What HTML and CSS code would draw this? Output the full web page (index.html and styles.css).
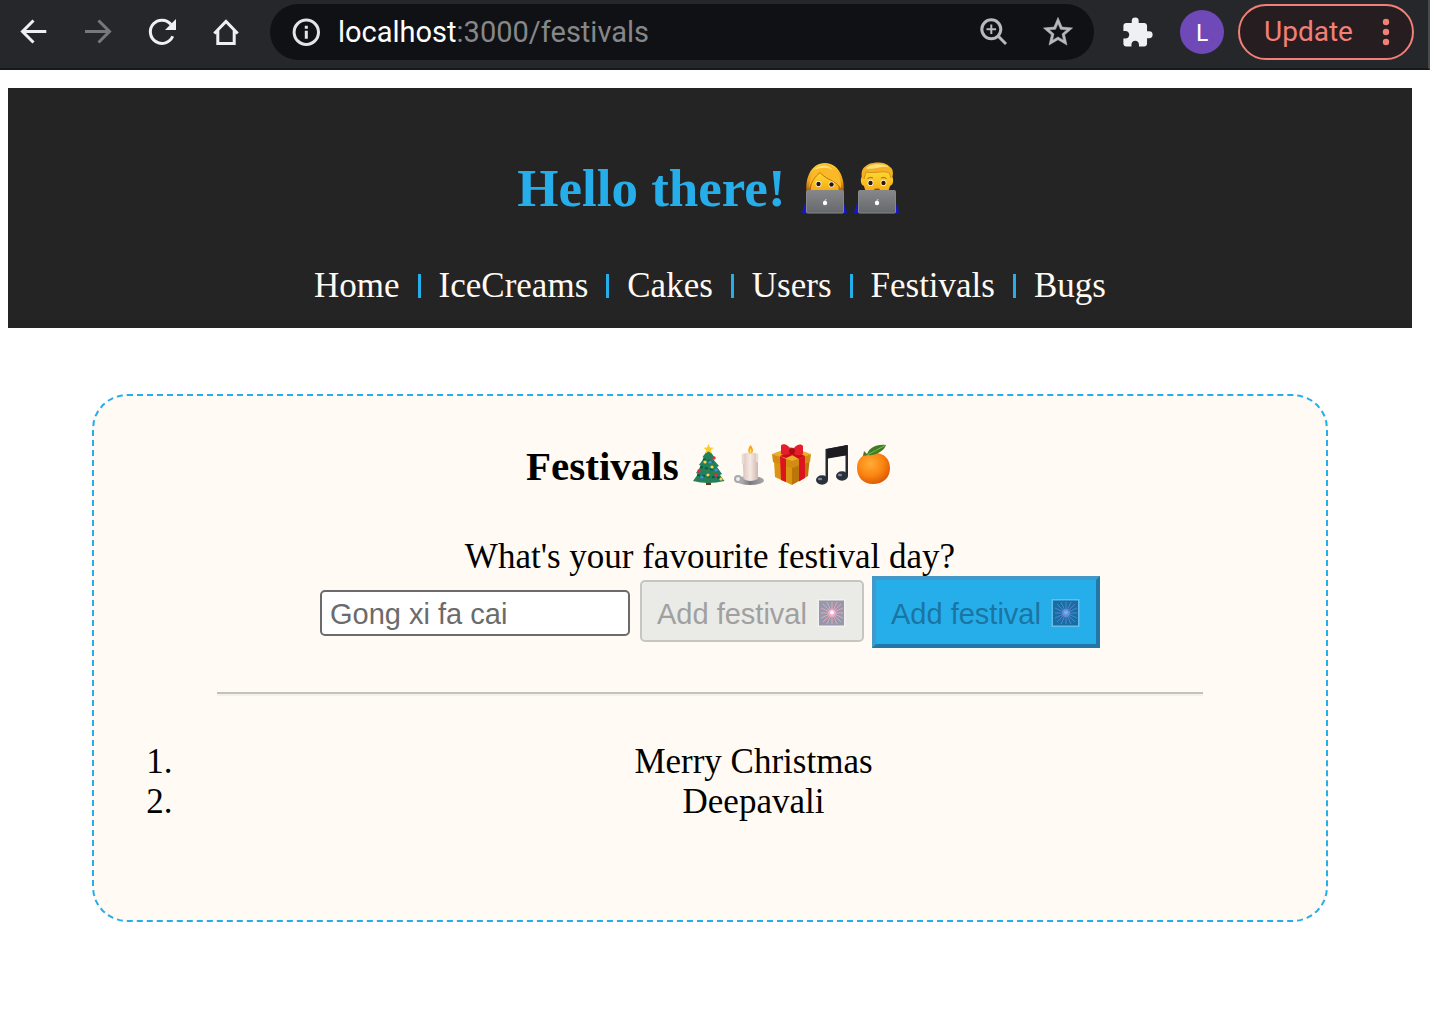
FILE: index.html
```html
<!DOCTYPE html>
<html lang="en">
<head>
<meta charset="utf-8">
<meta name="viewport" content="width=device-width, initial-scale=1">
<title>Festivals</title>
<link rel="stylesheet" href="styles.css">
</head>
<body>
<div class="toolbar">
  <button class="tool" type="button" aria-label="Back"><svg viewBox="0 0 32 32"><path d="M28.300 15.500H4.500M15.500 4.500L4.500 15.500L15.500 26.500"/></svg></button>
  <button class="tool tool-dim" type="button" aria-label="Forward"><svg viewBox="0 0 32 32"><path d="M3 15.500H27M16.500 4.500L27.500 15.500L16.500 26.500"/></svg></button>
  <button class="tool" type="button" aria-label="Reload"><svg viewBox="0 0 32 32"><path d="M26.700 20.200A11.600 11.600 0 1 1 25 8.500"/><path class="solid" d="M30 3V14H19Z"/></svg></button>
  <button class="tool" type="button" aria-label="Home"><svg viewBox="0 0 32 32"><path d="M4.300 17.500L16 5.500L27.700 17.500M7.800 14V27.500H24.200V14"/></svg></button>
  <div class="address">
    <svg class="address-info" viewBox="0 0 32 32"><circle cx="16.300" cy="16.300" r="12.200"/><path d="M16.300 14.800V22.800M16.300 9.800V12.800"/></svg>
    <div class="url"><span class="host">localhost</span>:3000/festivals</div>
    <button class="tool tool-soft" type="button" aria-label="Zoom"><svg viewBox="0 0 32 32"><circle cx="13.300" cy="13.300" r="9.500"/><path d="M20.300 20.300L28 28"/><path class="thin" d="M13.300 8.500V18.100M8.500 13.300H18.100"/></svg></button>
    <button class="tool tool-soft" type="button" aria-label="Bookmark"><svg viewBox="1 1 22 22"><path class="solid outline" d="M22 9.240l-7.190-.620L12 2 9.190 8.630 2 9.240l5.460 4.730L5.820 21 12 17.270 18.180 21l-1.630-7.030L22 9.240zM12 15.400l-3.760 2.270 1-4.280-3.320-2.880 4.380-.380L12 6.100l1.710 4.040 4.380.380-3.320 2.880 1 4.280L12 15.400z"/></svg></button>
  </div>
  <button class="tool extensions" type="button" aria-label="Extensions"><svg viewBox="1 0 23 23"><path class="solid" d="M20.500 11H19V7c0-1.100-.9-2-2-2h-4V3.500a2.500 2.500 0 0 0-5 0V5H4c-1.100 0-1.990.9-1.990 2v3.800H3.500c1.490 0 2.700 1.210 2.700 2.700s-1.210 2.700-2.700 2.700H2V20c0 1.100.9 2 2 2h3.800v-1.500c0-1.490 1.210-2.700 2.700-2.700s2.700 1.210 2.700 2.700V22H17c1.100 0 2-.9 2-2v-4h1.500a2.500 2.500 0 0 0 0-5z"/></svg></button>
  <button class="avatar" type="button">L</button>
  <button class="update" type="button">Update <svg viewBox="0 0 8 28"><circle cx="4" cy="4" r="3.200"/><circle cx="4" cy="14" r="3.200"/><circle cx="4" cy="24" r="3.200"/></svg></button>
</div>

<div class="page">
  <header class="banner">
    <h1>Hello there!
      <svg class="emoji" viewBox="-1 0 52 52" role="img" aria-label="woman technologist">
        <defs>
          <linearGradient id="hair" x1="0" y1="0" x2="0" y2="1"><stop offset="0" stop-color="#ffd43c"/><stop offset=".6" stop-color="#f0a01b"/><stop offset="1" stop-color="#a95808"/></linearGradient>
          <linearGradient id="face" x1="0" y1="0" x2="0" y2="1"><stop offset="0" stop-color="#ffdc38"/><stop offset="1" stop-color="#f6a50a"/></linearGradient>
          <linearGradient id="lid" x1="0" y1="0" x2="0" y2="1"><stop offset="0" stop-color="#85878a"/><stop offset="1" stop-color="#66686b"/></linearGradient>
        </defs>
        <path d="M2 51Q3 43 7 40H42Q46 43 47 51Z" fill="#1417c9"/>
        <path d="M6.500 30C5 16 11 1 25 1C38 1 45 15 43.500 30Z" fill="url(#hair)"/>
        <path d="M11 30C10 22 13 16 20 11C26 18 35 19 38.500 22V30Z" fill="url(#face)"/>
        <path d="M20 10.500C26 18 36 18 41 27C42 14 35 3 25 1.500C15 3 10 14 9 27C11 19 15 15 20 10.500Z" fill="#fbb927"/>
        <path d="M20 10.500C26 18 36 18 41 27M20 10.500C15 15 11 19 10 28" fill="none" stroke="#b4630c" stroke-width=".8"/>
        <path d="M14 8C19 2 29 2 33 8C28 5 21 5 14 8Z" fill="#ffe27c"/>
        <g fill="#fff"><circle cx="18.500" cy="22" r="2.900"/><circle cx="31.500" cy="22.500" r="2.900"/></g>
        <g fill="#2c1605"><circle cx="18.500" cy="22" r="2.200"/><circle cx="31.500" cy="22.500" r="2.200"/></g>
        <rect x="6.500" y="28.500" width="37" height="22.500" rx="1" fill="url(#lid)" stroke="#85878a"/>
        <circle cx="25" cy="41" r="2.200" fill="#fff"/><path d="M25 38.700L26 37.300" stroke="#fff"/>
      </svg><svg class="emoji" viewBox="-1 0 52 52" role="img" aria-label="man technologist">
        <path d="M2 51Q3 43 7 40H42Q46 43 47 51Z" fill="#1417c9"/>
        <path d="M11 14C8 15 8 23 12 24C13 30 17 33 25 33S37 30 38 24C42 23 42 15 39 14V7H11Z" fill="url(#face)"/>
        <path d="M10 17C8 7 13 4 17 2C24-.5 34 0 38 5C42 7 41 13 40 17L37.500 11C31 8 23 12 14 10L12 17Z" fill="#f5b126"/>
        <path d="M12 17L14 10C23 12 31 8 37.500 11L39 16" fill="none" stroke="#c98512" stroke-width=".8"/>
        <path d="M14 6.500C18 1 33 1 37 5.500C31 3 23 8 14 6.500Z" fill="#ffe27c"/>
        <path d="M15.500 16.500Q18 14.500 21 16M29 16Q32 14.500 34.500 16.500" fill="none" stroke="#a36a0e" stroke-width="1"/>
        <g fill="#fff"><circle cx="18.500" cy="21" r="2.900"/><circle cx="31.500" cy="21" r="2.900"/></g>
        <g fill="#2c1605"><circle cx="18.500" cy="21" r="2.200"/><circle cx="31.500" cy="21" r="2.200"/></g>
        <ellipse cx="25" cy="27.500" rx="3" ry="1" fill="#9a4a08"/>
        <rect x="6.500" y="28.500" width="37" height="22.500" rx="1" fill="url(#lid)" stroke="#85878a"/>
        <circle cx="25" cy="41" r="2.200" fill="#fff"/><path d="M25 38.700L26 37.300" stroke="#fff"/>
      </svg>
    </h1>
    <nav>
      <ul class="menu">
        <li><a href="#home">Home</a></li>
        <li><a href="#icecreams">IceCreams</a></li>
        <li><a href="#cakes">Cakes</a></li>
        <li><a href="#users">Users</a></li>
        <li><a href="#festivals">Festivals</a></li>
        <li><a href="#bugs">Bugs</a></li>
      </ul>
    </nav>
  </header>

  <main class="card" id="festivals">
    <h2>Festivals
      <svg class="emoji" viewBox="0 0 41 42" role="img" aria-label="Christmas tree">
        <path d="M17 35H22V41H17Z" fill="#6d3a19"/>
        <path d="M19.500 5L26 14L24 15L30 22L28 23L33 30L31 31L35.500 37Q19 41 4 37L9 30L7 29L12 22L10 21L15 14L13.500 13Z" fill="#23805a"/>
        <path d="M14 15L24 18M11 23L27 26M8 31L31 34" stroke="#0f5a3e" stroke-width="2" stroke-dasharray="3 2"/>
        <path d="M19.500 0L21 3.500L24.500 3.700L21.800 6L22.700 9.500L19.500 7.500L16.300 9.500L17.200 6L14.500 3.700L18 3.500Z" fill="#ffc928"/>
        <g fill="#e8293f"><circle cx="25" cy="14" r="1.700"/><circle cx="10" cy="27" r="1.700"/><circle cx="27" cy="31" r="1.700"/></g>
        <g fill="#ffd24a"><circle cx="16" cy="18" r="1.600"/><circle cx="23" cy="23" r="1.600"/><circle cx="19" cy="31" r="1.600"/><circle cx="32" cy="35" r="1.600"/></g>
        <g fill="#3b8ff0"><circle cx="21" cy="18" r="1.600"/><circle cx="13" cy="33" r="1.600"/><circle cx="27" cy="26" r="1.600"/></g>
      </svg><svg class="emoji" viewBox="0 0 41 42" role="img" aria-label="candle">
        <defs><linearGradient id="wax"><stop offset="0" stop-color="#d8c5bd"/><stop offset=".5" stop-color="#f7e9e3"/><stop offset="1" stop-color="#cdb6ae"/></linearGradient><linearGradient id="tin"><stop offset="0" stop-color="#d0d0d3"/><stop offset=".5" stop-color="#77797e"/><stop offset="1" stop-color="#a9aaad"/></linearGradient></defs>
        <ellipse cx="20" cy="36.500" rx="14" ry="4.500" fill="url(#tin)"/>
        <circle cx="8" cy="35" r="3" fill="#eee" stroke="#a8a9ad" stroke-width="2"/>
        <path d="M12.500 10Q20 7 28 10V35Q20 39 13.500 35Z" fill="url(#wax)"/>
        <path d="M13 11V19M27 11V17M23 12V14" stroke="#eadbd4" stroke-width="2.500" stroke-linecap="round"/>
        <path d="M20.500 1C24 5 23.500 9.500 20.500 9.500S17.500 5 20.500 1Z" fill="#ff9b16"/><path d="M20.500 4C22 7 21.700 9 20.500 9S19.300 7 20.500 4Z" fill="#ffe85a"/>
      </svg><svg class="emoji" viewBox="0 0 41 42" role="img" aria-label="present">
        <path d="M3 17L21 23V41L4 33Z" fill="#dc950f"/><path d="M38.500 17L21 23V41L37 32Z" fill="#bc750b"/>
        <path d="M1 10L20 3L40 10L21 18Z" fill="#efac28"/><path d="M1 10L21 17V24L2 18ZM40 10L21 17V24L39 18Z" fill="#d38c12"/>
        <path d="M9 12L15 15V38L10 36ZM28 15L34 12V34L28 37.500Z" fill="#dc1420"/>
        <path d="M9 12L26 5L31 7L15 14ZM12 6L17 4L34 12L28 15Z" fill="#c70e18"/>
        <path d="M21 7C17-1 10-1 10 2L10 10C13 12 17 11 21 8C24 12 29 12 32 10V2C29-1 24 1 21 7Z" fill="#e61d2a"/><circle cx="21" cy="7" r="3" fill="#a90b17"/>
      </svg><svg class="emoji" viewBox="0 0 41 42" role="img" aria-label="musical notes">
        <path d="M13.500 5L36 1V32H33.500V11.500L16 14.500V36H13.500Z" fill="#252a31"/><path d="M15 5L35 1V11L15 14Z" fill="#1d1c20"/>
        <ellipse cx="10" cy="36" rx="6" ry="4.700" fill="#29313b"/><ellipse cx="30" cy="32" rx="6" ry="4.700" fill="#29313b"/><ellipse cx="8" cy="35" rx="2.200" ry="1.200" fill="#79899a"/><ellipse cx="28" cy="31" rx="2.200" ry="1.200" fill="#79899a"/>
      </svg><svg class="emoji" viewBox="0 0 41 42" role="img" aria-label="tangerine">
        <defs><radialGradient id="peel" cx=".4" cy=".35" r=".65"><stop offset="0" stop-color="#ffad35"/><stop offset=".6" stop-color="#fb8511"/><stop offset="1" stop-color="#df5d07"/></radialGradient></defs>
        <path d="M20 9C31 8 37 15 37 24C37 34 30 40 20 40S4 33 4 24S10 9 20 9Z" fill="url(#peel)"/>
        <path d="M14 11C15 5 22 0 33 1C31 7 23 12 14 11Z" fill="#3f7d23"/><path d="M14 11Q22 7 32 1.500" fill="none" stroke="#89b854"/><path d="M11 7L15 11L10 12Z" fill="#50702a"/>
      </svg>
    </h2>
    <form class="entry">
      <label for="festival">What's your favourite festival day?</label>
      <div class="entry-row">
        <input id="festival" type="text" placeholder="Gong xi fa cai">
        <button class="add add-plain" type="button" disabled>Add festival <svg viewBox="0 0 34 34">
          <rect x="2.500" y="2" width="28" height="28" fill="#f3f1ef"/><rect x="4" y="3.500" width="25" height="25" fill="#9799aa"/>
          <path d="M17 5V27M6 16H28M8 7L26 25M26 7L8 25M12 5L22 27M22 5L12 27M6 11L28 21M28 11L6 21" stroke="#dfa9be"/><circle cx="17" cy="16" r="4" fill="#f3acc8"/><circle cx="17" cy="15.500" r="2" fill="#fff"/></svg></button>
        <button class="add add-blue" type="button" disabled>Add festival <svg viewBox="0 0 34 34">
          <rect x="2.500" y="2" width="28" height="28" fill="#67bde9"/><rect x="4" y="3.500" width="25" height="25" fill="#176ea5"/>
          <path d="M17 5V27M6 16H28M8 7L26 25M26 7L8 25M12 5L22 27M22 5L12 27M6 11L28 21M28 11L6 21" stroke="#5683cb"/><circle cx="17" cy="16" r="4" fill="#6a8bd6"/><circle cx="17" cy="15.500" r="2" fill="#63b9ec"/></svg></button>
      </div>
    </form>
    <hr>
    <ol>
      <li>Merry Christmas</li>
      <li>Deepavali</li>
    </ol>
  </main>
</div>
</body>
</html>
```
FILE: styles.css
```css
* { box-sizing: border-box; }

body {
  margin: 0;
  background: #fff;
  color: #000;
  font: 35px/40px "Liberation Serif", "Times New Roman", serif;
}

button { margin: 0; cursor: pointer; }

/* Browser toolbar */
.toolbar {
  display: flex;
  align-items: center;
  height: 70px;
  padding: 0 14px 4px 18px;
  background: #26272b;
  border-bottom: 2px solid #18191b;
  border-right: 2px solid #4a4b4e;
  font-family: Roboto, sans-serif;
}

.tool {
  flex: none;
  width: 32px;
  height: 32px;
  margin-right: 32px;
  padding: 0;
  border: 0;
  background: none;
  color: #eef0f2;
}

.tool-dim { color: #77787a; }
.tool-soft { color: #b9b9ba; }

.tool svg,
.address-info {
  display: block;
  width: 32px;
  height: 32px;
  fill: none;
  stroke: currentColor;
  stroke-width: 3;
}

.tool .solid { fill: currentColor; stroke: none; }
.tool .outline { stroke: currentColor; stroke-width: .4px; }
.tool .thin { stroke-width: 2; }

.address {
  display: flex;
  flex: 1;
  align-items: center;
  min-width: 0;
  height: 56px;
  margin-left: -4px;
  margin-right: 28px;
  padding: 0 20px;
  border-radius: 28px;
  background: #101115;
}

.address .tool:last-child { margin-right: 0; }

.address-info {
  flex: none;
  margin-right: 16px;
  color: #e4e4e4;
}

.url {
  flex: 1;
  overflow: hidden;
  color: #868789;
  font-size: 29px;
  white-space: nowrap;
}

.host { color: #fff; }

.extensions { margin-right: 26px; }

.avatar {
  flex: none;
  width: 44px;
  height: 44px;
  margin-right: 14px;
  padding: 0;
  border: 0;
  border-radius: 50%;
  background: #7049b9;
  color: #fff;
  font: 24px/44px Lato, sans-serif;
}

.update {
  display: flex;
  flex: none;
  align-items: center;
  justify-content: space-between;
  width: 176px;
  height: 56px;
  padding: 0 22px 0 24px;
  border: 2px solid #f28077;
  border-radius: 28px;
  background: #251d20;
  color: #f28077;
  font: 28px/32px Roboto, sans-serif;
}

.update svg { width: 8px; height: 28px; fill: currentColor; }

/* Page */
.page { padding: 18px 18px 0 8px; }

.banner {
  padding: 70px 16px 22px;
  background: #242424;
  text-align: center;
}

h1, h2 { margin: 0; }

h1 {
  margin-bottom: 48px;
  color: #26aeeb;
  font-size: 53px;
  line-height: 60px;
}

h1 .emoji { width: 52px; height: 52px; vertical-align: -8px; }

.menu {
  display: flex;
  flex-wrap: wrap;
  justify-content: center;
  margin: 0;
  padding: 0;
  list-style: none;
}

.menu li { display: flex; align-items: center; }

.menu li + li::before {
  width: 3px;
  height: 24px;
  margin: 0 18px;
  background: #26aeeb;
  content: "";
}

.menu a { color: #fffaf3; text-decoration: none; }

.card {
  margin: 66px 6% 0;
  padding: 46px 0 98px;
  border: 2px dashed #26aeeb;
  border-radius: 35px;
  background: #fffaf3;
  text-align: center;
}

h2 {
  margin-bottom: 48px;
  font-size: 41px;
  line-height: 48px;
}

h2 .emoji { width: 41px; height: 42px; vertical-align: -6px; }

.entry label { display: block; line-height: 38px; }

.entry-row {
  display: flex;
  flex-wrap: wrap;
  align-items: baseline;
  justify-content: center;
  gap: 8px;
}

.entry input,
.add {
  font: 29px/34px "Liberation Sans", Arial, sans-serif;
}

.entry input {
  width: 310px;
  height: 46px;
  margin: 0 2px 0 0;
  padding: 6px 8px 2px;
  border: 2px solid #6b6b6b;
  border-radius: 5px;
  background: #fff;
}

.entry input::placeholder { color: #6b6b6b; opacity: 1; }

.add svg { width: 34px; height: 34px; vertical-align: -7px; }

.add-plain {
  padding: 15px 13px 9px 15px;
  border: 2px solid #c5c5c2;
  border-radius: 5px;
  background: #eaeae7;
  color: #a0a09f;
}

.add-blue {
  padding: 17px 13px 13px 15px;
  border: 4px solid;
  border-color: #4099c8 #2277a6 #2277a6 #4099c8;
  background: #26aeeb;
  color: #1b75a1;
}

hr {
  width: 80%;
  margin: 44px auto 46px;
  border: 0;
  border-top: 2px solid #c2c1be;
  border-bottom: 2px solid #f3f1ee;
}

ol { margin: 0; padding: 0 0 0 87px; }
```
